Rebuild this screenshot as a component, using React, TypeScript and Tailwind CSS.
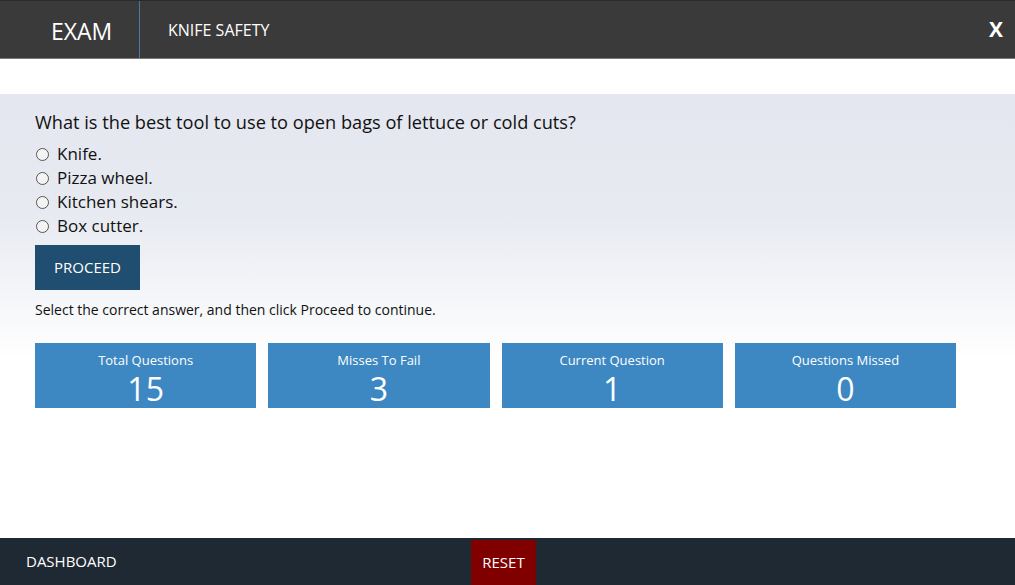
import React from "react";

const options = ["Knife.", "Pizza wheel.", "Kitchen shears.", "Box cutter."];

const stats = [
  { label: "Total Questions", value: "15" },
  { label: "Misses To Fail", value: "3" },
  { label: "Current Question", value: "1" },
  { label: "Questions Missed", value: "0" },
];

export default function App() {
  return (
    <div
      className="flex h-[585px] w-[1015px] flex-col overflow-hidden bg-white text-[#111]"
      style={{ fontFamily: '"Segoe UI", "Open Sans", "Noto Sans", sans-serif' }}
    >
      {/* top bar */}
      <header className="flex h-[59px] shrink-0 items-stretch border-b border-[#7a7a7a] border-t border-t-[#2a2a2a] bg-[#3a3a3a] text-white">
        <div className="flex w-[139px] items-center pl-[51px] pt-[3px] text-[23px]">
          EXAM
        </div>
        <div className="w-px bg-[#4a78a8]" />
        <div className="flex flex-1 items-center pl-[28px] pt-[1px] text-[16px]">
          KNIFE SAFETY
        </div>
        <div className="flex items-center pr-[12px] text-[21px] font-bold">X</div>
      </header>

      <div className="h-[35px] shrink-0 bg-white" />

      {/* question area */}
      <main className="flex-1 bg-[linear-gradient(to_bottom,#e4e7ef_0px,#e7eaf1_120px,#ffffff_265px)] px-[35px] pt-[15px]">
        <h1 className="text-[18.2px] leading-[27px]">
          What is the best tool to use to open bags of lettuce or cold cuts?
        </h1>
        <ul className="mt-[6px]">
          {options.map((o) => (
            <li key={o} className="flex h-[24px] items-center gap-[8px] text-[17px]">
              <span className="ml-[1px] h-[13px] w-[13px] rounded-full border-[1.5px] border-[#555] bg-[#f4f4f4]" />
              {o}
            </li>
          ))}
        </ul>
        <button className="mt-[7px] flex h-[45px] w-[105px] items-center justify-center bg-[#1f4e70] text-[15px] text-white">
          PROCEED
        </button>
        <p className="mt-[10px] text-[14px] leading-[20px]">
          Select the correct answer, and then click Proceed to continue.
        </p>
        <div className="mt-[23px] grid w-[921px] grid-cols-4 gap-[12px]">
          {stats.map((s) => (
            <div
              key={s.label}
              className="flex h-[65px] flex-col items-center bg-[#3d87c2] pt-[8px] text-white"
            >
              <span className="text-[13px] leading-[18px]">{s.label}</span>
              <span className="mt-[2px] text-[32px] leading-[36px]">{s.value}</span>
            </div>
          ))}
        </div>
      </main>

      {/* footer */}
      <footer className="flex h-[47px] shrink-0 items-stretch bg-[#1f2933] text-white">
        <div className="flex w-[471px] items-center pl-[26px] text-[15px]">
          DASHBOARD
        </div>
        <button className="mt-[2px] flex w-[65px] items-center justify-center bg-[#800000] text-[15px] text-white">
          RESET
        </button>
      </footer>
    </div>
  );
}
